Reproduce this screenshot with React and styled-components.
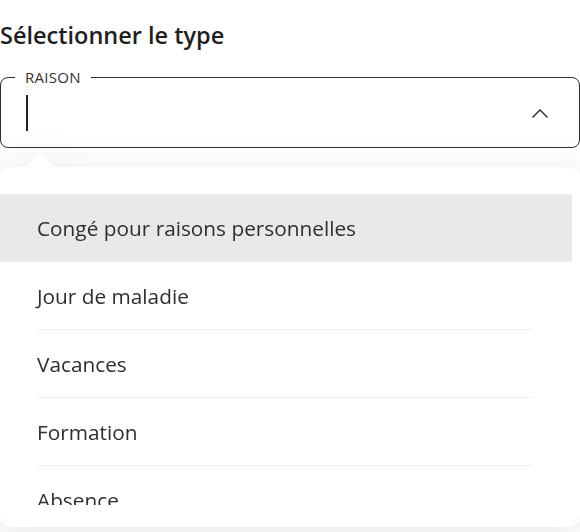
import React from 'react';
import styled, { createGlobalStyle } from 'styled-components';

const GlobalStyle = createGlobalStyle`
  html, body {
    margin: 0;
    background: #fff;
  }
  body {
    font-family: "Open Sans", "Noto Sans", sans-serif;
    color: #2b2b2b;
    overflow: hidden;
  }
`;

const reasons = [
  'Congé pour raisons personnelles',
  'Jour de maladie',
  'Vacances',
  'Formation',
  'Absence',
];

const Page = styled.div`
  width: 580px;
  height: 532px;
  padding-top: 21px;
  box-sizing: border-box;
`;

const Title = styled.h1`
  margin: 0;
  font-size: 23.5px;
  line-height: 28px;
  font-weight: 600;
  color: #1f1f1f;
`;

const Field = styled.fieldset`
  margin: 19px 0 0;
  padding: 9px 30px 16px 14px;
  border: 1px solid #2e2e2e;
  border-radius: 8px;
  min-inline-size: 0;
`;

const Legend = styled.legend`
  padding: 0 10px;
  font-size: 15px;
  line-height: 18px;
  letter-spacing: 0.3px;
  color: #333;
  text-transform: uppercase;
`;

const FieldRow = styled.div`
  display: flex;
  align-items: center;
  justify-content: space-between;
  height: 36px;
  padding-left: 11px;
`;

const Caret = styled.span`
  width: 2px;
  height: 36px;
  background: #222;
`;

const Popover = styled.div`
  margin-top: 3px;
  filter: drop-shadow(0 6px 18px rgba(0, 0, 0, 0.1));
`;

const Arrow = styled.div`
  width: 28px;
  height: 16px;
  margin-left: 26px;
  background: #fff;
  clip-path: polygon(50% 0, 100% 100%, 0 100%);
`;

const Card = styled.div`
  width: 580px;
  height: 360px;
  box-sizing: border-box;
  padding: 27px 8px 22px 0;
  background: #fff;
  border-radius: 12px;
`;

const List = styled.ul`
  list-style: none;
  margin: 0;
  padding: 0;
  height: 311px;
  overflow: hidden;
`;

const Item = styled.li`
  height: 68px;
  box-sizing: border-box;
  padding-left: 37px;
  background: ${(p) => (p.$active ? '#e9e9e9' : 'transparent')};
`;

const ItemInner = styled.div`
  height: 100%;
  box-sizing: border-box;
  margin-right: 39px;
  display: flex;
  align-items: center;
  font-size: 20.8px;
  color: #2e2e2e;
  border-bottom: 1px solid ${(p) => (p.$last ? 'transparent' : '#f0f0f0')};
`;

const Chevron = () => (
  <svg width="18" height="11" viewBox="0 0 18 11" fill="none">
    <polyline
      points="1.5,9.5 9,2 16.5,9.5"
      stroke="#222"
      strokeWidth="1.3"
    />
  </svg>
);

export default function App() {
  return (
    <Page>
      <GlobalStyle />
      <Title>Sélectionner le type</Title>
      <Field>
        <Legend>Raison</Legend>
        <FieldRow>
          <Caret />
          <Chevron />
        </FieldRow>
      </Field>
      <Popover>
        <Arrow />
        <Card>
          <List>
            {reasons.map((r, i) => (
              <Item key={r} $active={i === 0}>
                <ItemInner $last={i === reasons.length - 1}>{r}</ItemInner>
              </Item>
            ))}
          </List>
        </Card>
      </Popover>
    </Page>
  );
}
